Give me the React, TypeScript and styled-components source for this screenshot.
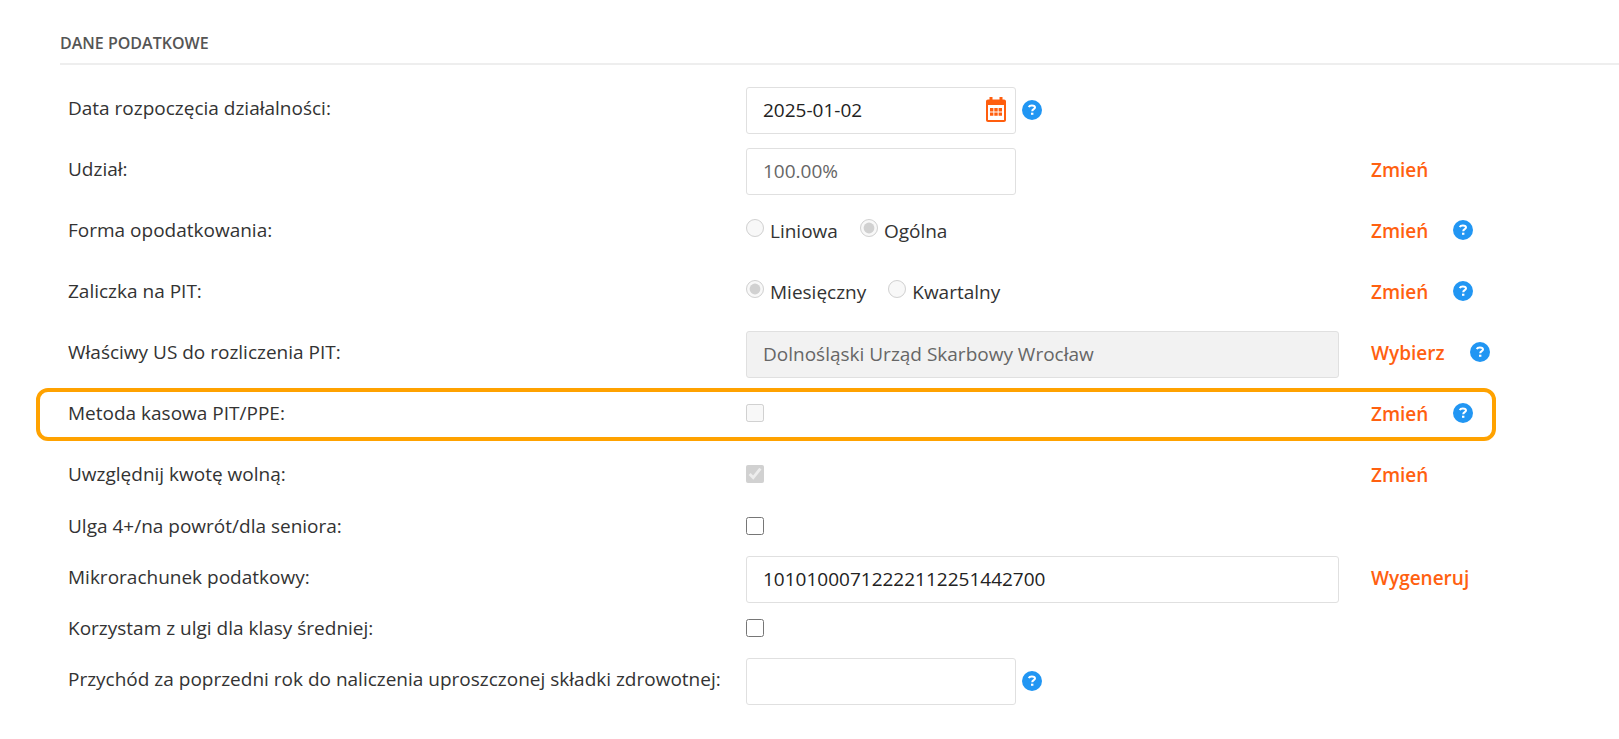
import React from 'react';
import styled, { createGlobalStyle } from 'styled-components';

const GlobalStyle = createGlobalStyle`
  *, *::before, *::after { box-sizing: border-box; }
  body {
    margin: 0;
    background: #fff;
    color: #333;
    font-family: "Open Sans", "Noto Sans", sans-serif;
    font-size: 19px;
    line-height: 26px;
  }
`;

const Page = styled.main`
  padding: 30px 0 32px 60px;
`;

const Heading = styled.h1`
  margin: 0 0 22px;
  padding-bottom: 7px;
  border-bottom: 2px solid #eee;
  color: #555;
  font-size: 16px;
  line-height: 26px;
  font-weight: 600;
  text-transform: uppercase;
`;

const Form = styled.form`
  display: flex;
  flex-direction: column;
  gap: 5px;
  padding-left: 8px;
`;

const Group = styled.div<{ $gap: number }>`
  display: flex;
  flex-direction: column;
  gap: ${(p) => p.$gap}px;
`;

const Row = styled.div<{ $highlighted?: boolean }>`
  position: relative;
  display: grid;
  grid-template-columns: minmax(0, 678fr) minmax(0, 625fr) minmax(0, 248fr);
  align-items: center;
  min-height: 47px;

  &::after {
    content: "";
    display: ${(p) => (p.$highlighted ? 'block' : 'none')};
    position: absolute;
    inset: -4px 123px -2px -32px;
    border: 4px solid #ffa200;
    border-radius: 12px;
    pointer-events: none;
  }
`;

const Label = styled.label`
  padding-bottom: 5px;
  white-space: nowrap;
`;

const Control = styled.div`
  display: flex;
  align-items: center;
  gap: 6px;
  padding-right: 32px;
`;

const Actions = styled.div`
  display: flex;
  align-items: center;
  gap: 25px;
  padding-bottom: 4px;
`;

const Field = styled.div<{ $wide?: boolean; $filled?: boolean }>`
  display: flex;
  align-items: center;
  width: ${(p) => (p.$wide ? '100%' : '270px')};
  height: 47px;
  padding: 0 9px 2px 16px;
  border: 1px solid #e0e0e0;
  border-radius: 3px;
  background: ${(p) => (p.$filled ? '#f2f2f2' : '#fff')};
`;

const TextInput = styled.input<{ $muted?: boolean }>`
  flex: 1;
  min-width: 0;
  height: 100%;
  padding: 0;
  border: 0;
  outline: 0;
  background: transparent;
  color: ${(p) => (p.$muted ? '#666' : '#222')};
  font: inherit;
`;

const IconButton = styled.button`
  display: flex;
  flex: none;
  padding: 0;
  border: 0;
  background: none;
  cursor: pointer;
`;

const HelpButton = styled(IconButton)`
  padding-bottom: 2px;
`;

const ActionButton = styled.button`
  padding: 0;
  border: 0;
  background: none;
  color: #ff6010;
  font: inherit;
  font-weight: 600;
  cursor: pointer;
`;

const Tick = styled.input`
  flex: none;
  width: 18px;
  height: 18px;
  margin: 0 0 6px;
`;

const Options = styled.div`
  display: flex;
  gap: 22px;
  padding-bottom: 3px;
`;

const Option = styled.label`
  display: flex;
  align-items: center;
  gap: 6px;
`;

function Help() {
  return (
    <HelpButton type="button" aria-label="Pomoc">
      <svg width="20" height="20" viewBox="0 0 20 20" aria-hidden="true">
        <circle cx="10" cy="10" r="10" fill="#2196f3" />
        <path
          d="M6.8 7.1C7.2 5.9 8.4 5.5 9.8 5.5C11.8 5.5 13 6.2 13 7.5C13 9.2 10.2 9 10.2 11.2"
          fill="none"
          stroke="#fff"
          strokeWidth="2"
        />
        <rect x="9" y="12.7" width="2.4" height="2.1" fill="#fff" />
      </svg>
    </HelpButton>
  );
}

function Calendar() {
  return (
    <IconButton type="button" aria-label="Wybierz datę">
      <svg width="20" height="25" viewBox="0 0 20 25" aria-hidden="true">
        <path
          fill="#ff5e0e"
          fillRule="evenodd"
          d="M3.5 0H6.5V2.5H13.5V0H16.5V2.5H18C19.2 2.5 20 3.3 20 4.5V23C20 24.2 19.2 25 18 25H2C.8 25 0 24.2 0 23V4.5C0 3.3 .8 2.5 2 2.5H3.5ZM2 8V23H18V8Z"
        />
        <path
          fill="#ff5e0e"
          d="M4 11H7.4V14.4H4ZM8.3 11H11.7V14.4H8.3ZM12.6 11H16V14.4H12.6ZM4 15.4H7.4V18.8H4ZM8.3 15.4H11.7V18.8H8.3ZM12.6 15.4H16V18.8H12.6Z"
        />
      </svg>
    </IconButton>
  );
}

export default function App() {
  return (
    <>
      <GlobalStyle />
      <Page>
        <Heading>Dane podatkowe</Heading>
        <Form>
          <Group $gap={14}>
            <Row>
              <Label htmlFor="start">Data rozpoczęcia działalności:</Label>
              <Control>
                <Field>
                  <TextInput id="start" type="text" defaultValue="2025-01-02" />
                  <Calendar />
                </Field>
                <Help />
              </Control>
            </Row>
            <Row>
              <Label htmlFor="share">Udział:</Label>
              <Control>
                <Field>
                  <TextInput id="share" type="text" defaultValue="100.00%" readOnly $muted />
                </Field>
              </Control>
              <Actions>
                <ActionButton type="button">Zmień</ActionButton>
              </Actions>
            </Row>
            <Row role="radiogroup" aria-labelledby="tax-form">
              <Label as="span" id="tax-form">Forma opodatkowania:</Label>
              <Options>
                <Option>
                  <Tick type="radio" name="tax-form" disabled />
                  Liniowa
                </Option>
                <Option>
                  <Tick type="radio" name="tax-form" defaultChecked disabled />
                  Ogólna
                </Option>
              </Options>
              <Actions>
                <ActionButton type="button">Zmień</ActionButton>
                <Help />
              </Actions>
            </Row>
            <Row role="radiogroup" aria-labelledby="advance">
              <Label as="span" id="advance">Zaliczka na PIT:</Label>
              <Options>
                <Option>
                  <Tick type="radio" name="advance" defaultChecked disabled />
                  Miesięczny
                </Option>
                <Option>
                  <Tick type="radio" name="advance" disabled />
                  Kwartalny
                </Option>
              </Options>
              <Actions>
                <ActionButton type="button">Zmień</ActionButton>
                <Help />
              </Actions>
            </Row>
            <Row>
              <Label htmlFor="office">Właściwy US do rozliczenia PIT:</Label>
              <Control>
                <Field $wide $filled>
                  <TextInput
                    id="office"
                    type="text"
                    defaultValue="Dolnośląski Urząd Skarbowy Wrocław"
                    readOnly
                    $muted
                  />
                </Field>
              </Control>
              <Actions>
                <ActionButton type="button">Wybierz</ActionButton>
                <Help />
              </Actions>
            </Row>
            <Row $highlighted>
              <Label htmlFor="cash">Metoda kasowa PIT/PPE:</Label>
              <Control>
                <Tick id="cash" type="checkbox" disabled />
              </Control>
              <Actions>
                <ActionButton type="button">Zmień</ActionButton>
                <Help />
              </Actions>
            </Row>
            <Row>
              <Label htmlFor="free">Uwzględnij kwotę wolną:</Label>
              <Control>
                <Tick id="free" type="checkbox" defaultChecked disabled />
              </Control>
              <Actions>
                <ActionButton type="button">Zmień</ActionButton>
              </Actions>
            </Row>
          </Group>
          <Group $gap={4}>
            <Row>
              <Label htmlFor="relief">Ulga 4+/na powrót/dla seniora:</Label>
              <Control>
                <Tick id="relief" type="checkbox" />
              </Control>
            </Row>
            <Row>
              <Label htmlFor="account">Mikrorachunek podatkowy:</Label>
              <Control>
                <Field $wide>
                  <TextInput id="account" type="text" defaultValue="10101000712222112251442700" />
                </Field>
              </Control>
              <Actions>
                <ActionButton type="button">Wygeneruj</ActionButton>
              </Actions>
            </Row>
            <Row>
              <Label htmlFor="middle">Korzystam z ulgi dla klasy średniej:</Label>
              <Control>
                <Tick id="middle" type="checkbox" />
              </Control>
            </Row>
            <Row>
              <Label htmlFor="income">
                Przychód za poprzedni rok do naliczenia uproszczonej składki zdrowotnej:
              </Label>
              <Control>
                <Field>
                  <TextInput id="income" type="text" />
                </Field>
                <Help />
              </Control>
            </Row>
          </Group>
        </Form>
      </Page>
    </>
  );
}
